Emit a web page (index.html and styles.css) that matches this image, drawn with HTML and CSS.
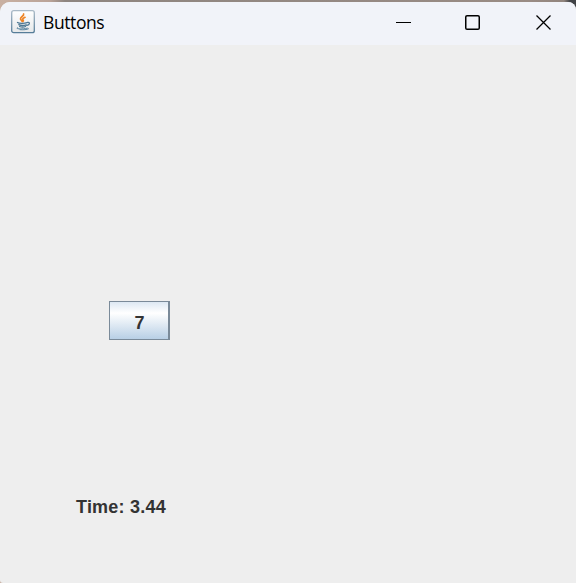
FILE: index.html
```html
<!DOCTYPE html>
<html lang="en">
<head>
<meta charset="utf-8">
<title>Buttons</title>
<link rel="stylesheet" href="styles.css">
</head>
<body>
<main class="window">
  <header class="titlebar">
    <svg class="app-icon" viewBox="0 0 24 24" aria-hidden="true">
      <defs>
        <linearGradient id="edge" x1="0" y1="0" x2="0" y2="1"><stop offset="0" stop-color="#a9b9c6"/><stop offset="1" stop-color="#557c98"/></linearGradient>
        <linearGradient id="face" x1="0" y1="0" x2="0" y2="1"><stop offset="0" stop-color="#fff"/><stop offset="1" stop-color="#e6e8ea"/></linearGradient>
      </defs>
      <rect x=".7" y=".7" width="22.6" height="22" rx="2" fill="url(#face)" stroke="url(#edge)" stroke-width="1.3"/>
      <g fill="none" stroke-linecap="round">
        <path d="M12.600 4c.8 2-3.500 2.800-3.100 4.800.2 1.200 1.500 1.700 1.600 2.700M14 7.300c-2.700 1.200-2.600 2-1.800 2.900.4.600 0 1.100-.4 1.400" stroke="#ee8425" stroke-width="1.700"/>
        <path d="M6.500 12.500c1.500 1 7 1 9.500.2M16.500 12.400c2.700-.7 2.600 2.300-.6 3M7.800 14.700c1.800.8 5.400.8 7.400.1M8.600 16.500c1.700.7 4.300.7 5.900 0" stroke="#4d7894" stroke-width="1.300"/>
        <path d="M6.300 17.700c-2.800 1.100 4.300 1.900 10.200.4M9 19.700c3.500.3 6.800 0 8.500-.9" stroke="#5c86a1"/>
      </g>
    </svg>
    <h1 class="title">Buttons</h1>
    <nav class="controls" aria-label="Window">
      <svg class="control minimize" viewBox="0 0 16 16"><path d="M0 7.500h15" stroke-width="1"/></svg>
      <svg class="control maximize" viewBox="0 0 16 16"><rect x=".75" y=".75" width="13.500" height="13.500" rx="1.300" stroke-width="1.500"/></svg>
      <svg class="control" viewBox="0 0 16 16"><path d="M.5.5l14 14M14.500.5l-14 14" stroke-width="1.300"/></svg>
    </nav>
  </header>
  <section class="content">
    <button class="number" type="button">7</button>
    <p class="time">Time: 3.44</p>
  </section>
</main>
</body>
</html>
```
FILE: styles.css
```css
* { box-sizing: border-box; }
body {
  height: 583px;
  margin: 0;
  padding-top: 2px;
  overflow: hidden;
  background: linear-gradient(90deg, #c9b0a2 0, #baa398 50px, #8e8580 65px, #998b84 530px, #91847d 564px, #414347 570px);
}
.window {
  display: flex;
  flex-direction: column;
  height: 581px;
  overflow: hidden;
  background: #eee;
  border-radius: 10px 8px 0 3px;
}
.titlebar {
  display: flex;
  flex: 0 0 43px;
  align-items: center;
  padding: 0 24px 2px 11px;
  background: #f1f3f9;
}
.app-icon { width: 24px; height: 24px; margin-top: -1px; }
.title {
  margin: 0 0 1px 8px;
  color: #000;
  font: 400 17.500px/24px "Open Sans", "Noto Sans", sans-serif;
  letter-spacing: -.4px;
}
.controls { display: flex; margin: 1px 0 0 auto; }
.control { width: 16px; height: 16px; fill: none; stroke: #000; }
.minimize { margin-right: 53px; }
.maximize { margin-right: 55px; }
.content { flex: 1; padding: 256px 0 0 76px; }
.number, .time {
  color: #333;
  font: 700 18px/20px "Liberation Sans", Arial, sans-serif;
}
.number {
  display: block;
  width: 61px;
  height: 39px;
  margin-left: 33px;
  padding: 4px 0 0 1px;
  border: 1px solid #7a8a99;
  border-right-width: 2px;
  border-radius: 0;
  background: linear-gradient(#dde8f3 0, #fff 30%, #b8cfe5 100%);
}
.time { margin: 157px 0 0; letter-spacing: .22px; }
```
